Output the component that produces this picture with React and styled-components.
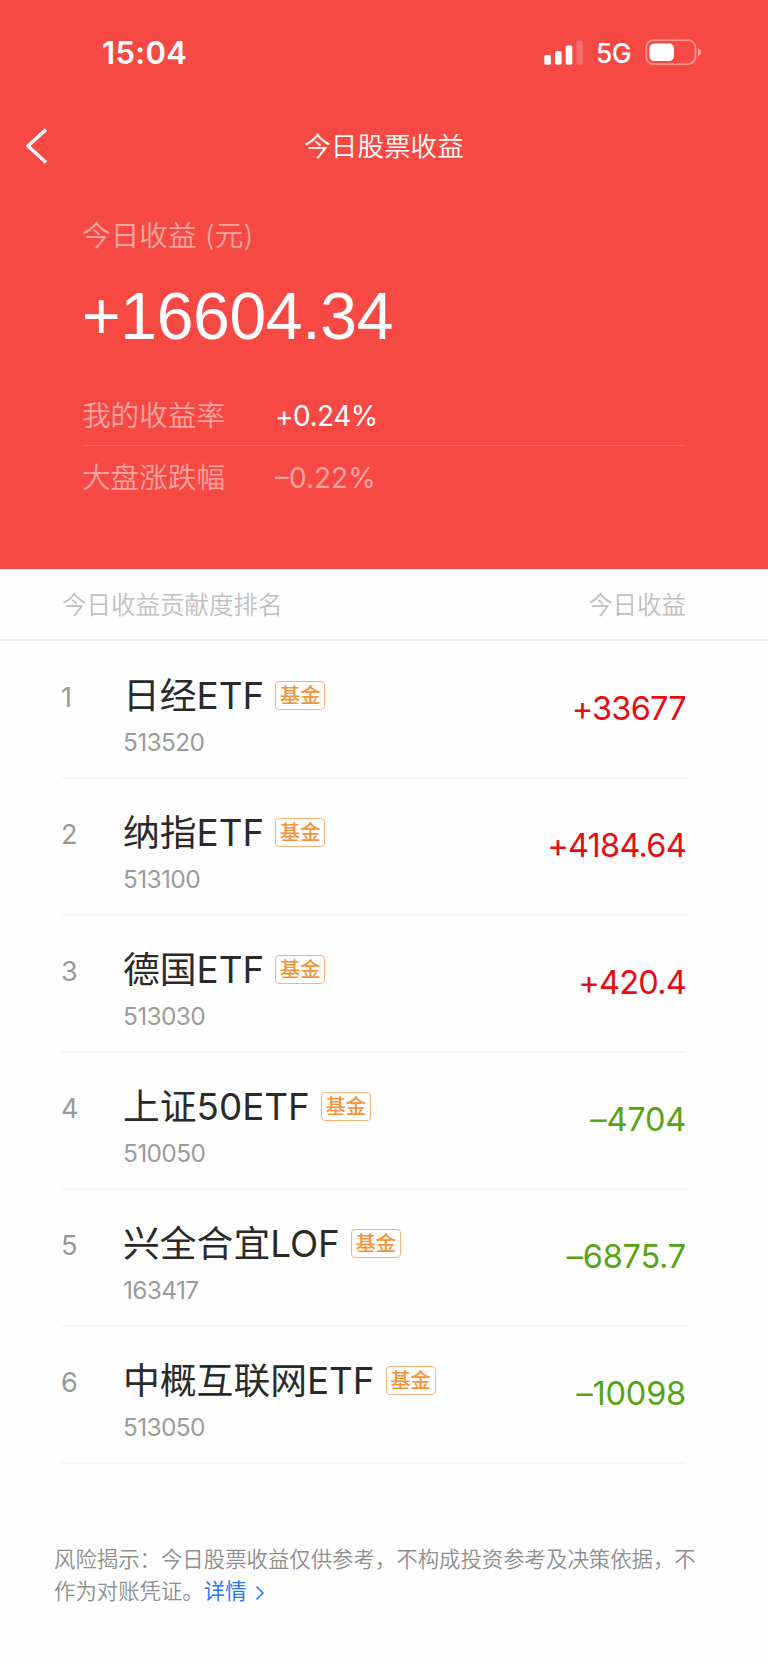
import React from "react";
import styled, { createGlobalStyle } from "styled-components";

const GlobalStyle = createGlobalStyle`
  * {
    box-sizing: border-box;
  }
  body {
    margin: 0;
    background-color: #fefefe;
    font-family: Inter, "Noto Sans CJK SC", sans-serif;
    font-weight: 400;
  }
`;

const Page = styled.div`
  width: 768px;
  height: 1665px;
  overflow: hidden;
`;

const Header = styled.header`
  height: 568.5px;
  background-color: #f64944;
  color: white;
`;

const StatusBar = styled.div`
  height: 105px;
  padding: 0 66px 0 102px;
  display: flex;
  align-items: center;
  justify-content: space-between;
`;

const Time = styled.span`
  font-size: 31px;
  font-weight: 600;
  letter-spacing: 0.3px;
`;

const StatusIcons = styled.div`
  display: flex;
  align-items: center;
`;

const Network = styled.span`
  margin: 1px 14px 0 12px;
  font-size: 26.5px;
  font-weight: 500;
  letter-spacing: -0.6px;
`;

const NavBar = styled.nav`
  height: 81px;
  padding: 0 26px;
  display: grid;
  grid-template-columns: 22px 1fr 22px;
  align-items: center;
`;

const BackButton = styled.button`
  padding: 0;
  border: 0;
  background: none;
  display: flex;
`;

const Title = styled.h1`
  margin: 0;
  font-size: 26.6px;
  font-weight: 350;
  line-height: 40px;
  text-align: center;
`;

const Summary = styled.section`
  padding: 29px 82px 0;
`;

const SummaryLabel = styled.div`
  height: 42px;
  font-size: 28.7px;
  font-weight: 350;
  line-height: 42px;
  color: rgba(255, 255, 255, 0.5);
`;

const Total = styled.div`
  margin: 19px 0 27px;
  height: 80px;
  font-family: "Liberation Sans", sans-serif;
  font-size: 66px;
  line-height: 80px;
  letter-spacing: -0.3px;
`;

const Rate = styled.div`
  height: 62px;
  padding-top: 3px;
  display: grid;
  grid-template-columns: 193px 1fr;
  align-items: center;
  font-size: 28.6px;
  font-weight: 350;
  line-height: 42px;
  color: rgba(255, 255, 255, 0.5);
  & + & {
    border-top: 1px solid rgba(255, 255, 255, 0.15);
  }
`;

const RateValue = styled.span`
  font-size: 28px;
  font-weight: 400;
  letter-spacing: ${(props) => (props.$strong ? "-0.5px" : "0")};
  color: ${(props) => (props.$strong ? "white" : "inherit")};
`;

const Columns = styled.div`
  height: 72px;
  padding: 0 82px 0 62px;
  border-bottom: 2px solid #eeeeee;
  display: flex;
  align-items: center;
  justify-content: space-between;
  font-size: 24.5px;
  font-weight: 350;
  color: #c0c0c0;
`;

const List = styled.ul`
  margin: 0;
  padding: 1px 82px 0 61px;
  list-style: none;
`;

const Item = styled.li`
  height: 137px;
  border-bottom: 2px solid #f7f7f7;
  display: grid;
  grid-template-columns: 62px 1fr auto;
`;

const Rank = styled.span`
  padding-top: 38px;
  font-size: 27px;
  line-height: 36px;
  color: #999999;
`;

const NameRow = styled.div`
  margin-top: 28px;
  height: 52px;
  display: flex;
  align-items: center;
`;

const Name = styled.span`
  padding-top: 1px;
  font-size: 36.8px;
  line-height: 52px;
  color: #2a2a2a;
`;

const Badge = styled.span`
  margin-left: 11px;
  width: 50px;
  height: 29px;
  border: 1.5px solid #f9b277;
  border-radius: 4px;
  display: flex;
  align-items: center;
  justify-content: center;
  font-size: 20.4px;
  font-weight: 500;
  line-height: 26px;
  color: #f5923a;
`;

const Code = styled.div`
  font-size: 24.5px;
  letter-spacing: -0.65px;
  line-height: 40px;
  color: #9c9c9c;
`;

const Profit = styled.span`
  padding-top: 45px;
  font-size: 32.5px;
  line-height: 44px;
  letter-spacing: ${(props) => (props.$down ? "-0.2px" : "-0.75px")};
  color: ${(props) => (props.$down ? "#57a315" : "#e60c12")};
`;

const Disclaimer = styled.p`
  margin: 79px 54px 0;
  font-size: 21.4px;
  font-weight: 350;
  line-height: 32px;
  white-space: nowrap;
  color: #8e8e8e;
`;

const DetailLink = styled.a`
  font-weight: 400;
  color: #2a78f5;
  svg {
    margin-left: 8px;
    vertical-align: -2px;
  }
`;

const holdings = [
  { name: "日经ETF", code: "513520", profit: "+33677" },
  { name: "纳指ETF", code: "513100", profit: "+4184.64" },
  { name: "德国ETF", code: "513030", profit: "+420.4" },
  { name: "上证50ETF", code: "510050", profit: "–4704" },
  { name: "兴全合宜LOF", code: "163417", profit: "–6875.7" },
  { name: "中概互联网ETF", code: "513050", profit: "–10098" },
];

const SignalIcon = () => (
  <svg width="40" height="26" viewBox="0 0 40 26" fill="white">
    <rect x="0.3" y="15" width="6.6" height="9.7" rx="1.8" />
    <rect x="11" y="11" width="6.6" height="13.7" rx="1.8" />
    <rect x="21.7" y="5.5" width="6.6" height="19.2" rx="1.8" />
    <rect x="32.4" y="0.5" width="6.6" height="24.2" rx="1.8" opacity="0.2" />
  </svg>
);

const BatteryIcon = () => (
  <svg width="57" height="27" viewBox="0 0 57 27" fill="none">
    <rect
      x="1.2"
      y="1.2"
      width="49.3"
      height="24"
      rx="7.5"
      stroke="white"
      strokeOpacity="0.4"
      strokeWidth="1.8"
    />
    <rect x="4.4" y="4.5" width="24.6" height="17.6" rx="5" fill="white" />
    <path d="M53 9.3c3.8 1.2 3.8 6.8 0 8z" fill="white" fillOpacity="0.5" />
  </svg>
);

const RankItem = ({ rank, name, code, profit }) => (
  <Item>
    <Rank>{rank}</Rank>
    <div>
      <NameRow>
        <Name>{name}</Name>
        <Badge>基金</Badge>
      </NameRow>
      <Code>{code}</Code>
    </div>
    <Profit $down={profit.startsWith("–")}>{profit}</Profit>
  </Item>
);

const App = () => {
  return (
    <>
      <GlobalStyle />
      <Page>
        <Header>
          <StatusBar>
            <Time>15:04</Time>
            <StatusIcons>
              <SignalIcon />
              <Network>5G</Network>
              <BatteryIcon />
            </StatusIcons>
          </StatusBar>
          <NavBar>
            <BackButton aria-label="返回">
              <svg width="22" height="36" viewBox="0 0 22 36" fill="none">
                <path d="M20 1.5L2 18L20 34.5" stroke="white" strokeWidth="3.4" />
              </svg>
            </BackButton>
            <Title>今日股票收益</Title>
          </NavBar>
          <Summary>
            <SummaryLabel>今日收益 (元)</SummaryLabel>
            <Total>+16604.34</Total>
            <Rate>
              我的收益率<RateValue $strong>+0.24%</RateValue>
            </Rate>
            <Rate>
              大盘涨跌幅<RateValue>–0.22%</RateValue>
            </Rate>
          </Summary>
        </Header>
        <Columns>
          <span>今日收益贡献度排名</span>
          <span>今日收益</span>
        </Columns>
        <List>
          {holdings.map((item, index) => (
            <RankItem key={item.code} rank={index + 1} {...item} />
          ))}
        </List>
        <Disclaimer>
          风险揭示：今日股票收益仅供参考，不构成投资参考及决策依据，不
          <br />
          作为对账凭证。
          <DetailLink>
            详情
            <svg width="10" height="16" viewBox="0 0 10 16" fill="none">
              <path d="M1.5 1.5L8 8L1.5 14.5" stroke="#2a78f5" strokeWidth="1.6" />
            </svg>
          </DetailLink>
        </Disclaimer>
      </Page>
    </>
  );
};

export default App;
